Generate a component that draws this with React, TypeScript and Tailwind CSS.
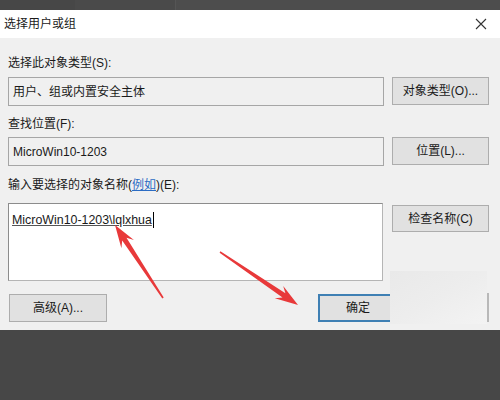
import React from "react";

type P = [number, number];

function arrowPoints(tail: P, tip: P): string {
  const dx = tip[0] - tail[0];
  const dy = tip[1] - tail[1];
  const len = Math.hypot(dx, dy);
  const ux = dx / len;
  const uy = dy / len;
  const nx = -uy;
  const ny = ux;
  const at = (d: number, w: number): P => [tip[0] - ux * d + nx * w, tip[1] - uy * d + ny * w];
  const pts: P[] = [
    [tail[0] + nx * 0.8, tail[1] + ny * 0.8],
    at(17, 2.6),
    at(23, 7.5),
    tip,
    at(23, -7.5),
    at(17, -2.6),
    [tail[0] - nx * 0.8, tail[1] - ny * 0.8],
  ];
  return pts.map((p) => `${p[0].toFixed(1)},${p[1].toFixed(1)}`).join(" ");
}

const font = {
  fontFamily: '"Liberation Sans", "Noto Sans CJK SC", sans-serif',
};

function Btn({ children, className = "" }: { children: React.ReactNode; className?: string }) {
  return (
    <div
      className={
        "flex items-center justify-center bg-[#e1e1e1] border border-[#adadad] text-[12px] text-[#1a1a1a] " +
        className
      }
    >
      {children}
    </div>
  );
}

export default function App() {
  return (
    <div className="relative w-[500px] h-[400px] overflow-hidden bg-[#474747]" style={font}>
      {/* top dark strip */}
      <div className="flex h-[10px]">
        <div className="w-[75px] bg-[#474747]" />
        <div className="w-[100px] bg-[#4a4a4a]" />
        <div className="flex-1 bg-[#4d4d4d] border-l border-[#555]" />
      </div>
      {/* title bar */}
      <div className="flex h-[28px] items-center justify-between bg-white pl-[4px] pr-[13px]">
        <span className="text-[12px] text-[#1a1a1a]">选择用户或组</span>
        <svg width="12" height="12" viewBox="0 0 12 12">
          <path d="M1 1 L11 11 M11 1 L1 11" stroke="#333" strokeWidth="1.1" />
        </svg>
      </div>
      {/* body */}
      <div className="flex h-[292px] flex-col bg-[#f0f0f0] px-[8px] pt-[18px] text-[12px] text-[#1a1a1a]">
        <div className="h-[14px] leading-[14px]">选择此对象类型(S):</div>
        <div className="mt-[7px] flex gap-[8px]">
          <div className="flex h-[29px] w-[376px] items-center border border-[#a6a6a6] bg-[#f0f0f0] pl-[4px] text-[12px]">
            用户、组或内置安全主体
          </div>
          <Btn className="h-[28px] w-[97px]">对象类型(O)...</Btn>
        </div>

        <div className="mt-[11px] h-[14px] leading-[14px]">查找位置(F):</div>
        <div className="mt-[6px] flex gap-[8px]">
          <div className="flex h-[29px] w-[376px] items-center border border-[#a6a6a6] bg-[#f0f0f0] pl-[4px] text-[12px]">
            MicroWin10-1203
          </div>
          <Btn className="h-[28px] w-[97px]">位置(L)...</Btn>
        </div>

        <div className="mt-[12px] h-[14px] leading-[14px]">
          输入要选择的对象名称(
          <span className="text-[#2b6cc4] underline">例如</span>
          )(E):
        </div>
        <div className="mt-[11px] flex gap-[9px]">
          <div className="h-[78px] w-[375px] border border-[#b5b5b5] border-t-[#8c8c8c] border-l-[#8c8c8c] bg-white pl-[3px] pt-[7px]">
            <span className="inline-flex items-center text-[12.4px] leading-[14px]">
              <span className="underline decoration-[#555]">MicroWin10-1203\lqlxhua</span>
              <span className="ml-[1px] inline-block h-[16px] w-[1px] bg-black" />
            </span>
          </div>
          <Btn className="mt-[2px] h-[27px] w-[97px]">检查名称(C)</Btn>
        </div>

        <div className="mt-[13px] flex">
          <Btn className="ml-[1px] h-[28px] w-[98px]">高级(A)...</Btn>
          <div className="ml-[211px] flex h-[28px] w-[80px] items-center justify-center border-2 border-[#3f80b4] bg-[#e1e1e1] text-[12px]">
            确定
          </div>
          <Btn className="ml-[8px] h-[28px] w-[82px]">取消</Btn>
        </div>
      </div>

      {/* light patch over bottom right */}
      <div className="absolute left-[390px] top-[271px] h-[53px] w-[97px] bg-gradient-to-br from-[#e9e9e9] via-[#ededed] to-[#f3f3f3]" />
      <div className="absolute left-[487px] top-[293px] h-[29px] w-[2px] bg-[#b8b8b8]" />

      {/* red arrows */}
      <svg className="absolute left-0 top-0" width="500" height="400" viewBox="0 0 500 400">
        <polygon points={arrowPoints([163, 298], [115, 225])} fill="#e8393a" />
        <polygon points={arrowPoints([220, 252], [298, 305])} fill="#e8393a" />
      </svg>
    </div>
  );
}
